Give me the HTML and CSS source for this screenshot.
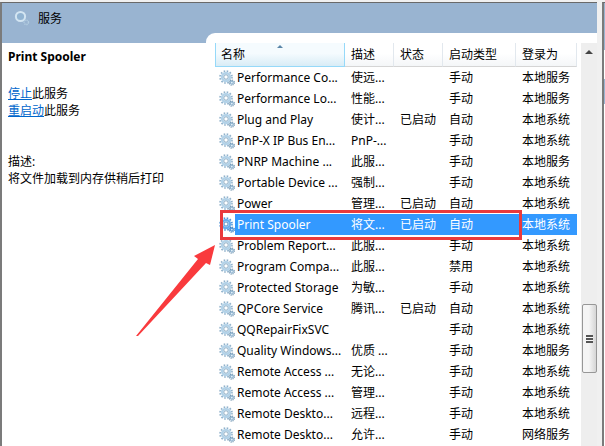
FILE: index.html
```html
<!DOCTYPE html>
<html lang="zh-CN">
<head>
    <meta charset="UTF-8">
    <title>服务</title>
    <link rel="stylesheet" href="styles.css">
</head>
<body>
    <svg class="defs" aria-hidden="true">
        <symbol id="gear" viewBox="0 0 16 16">
            <circle cx="7" cy="7" r="6" fill="none" stroke="#8fb0ca" stroke-width="1.6" stroke-dasharray="1.6 1.54"/>
            <circle cx="7" cy="7" r="4" fill="#e4f1f9" stroke="#b3d2e8" stroke-width="2.4"/>
            <circle cx="7" cy="7" r="2.2" fill="#fff" stroke="#7f9fb9" stroke-width=".8"/>
            <circle cx="12.8" cy="12.6" r="2.5" fill="none" stroke="#7899b2" stroke-width="1.3" stroke-dasharray="1.1 .86"/>
            <circle cx="12.8" cy="12.6" r="1.5" fill="#e4f1f9" stroke="#8fb3cf" stroke-width="1.2"/>
        </symbol>
        <symbol id="gear-on" viewBox="0 0 16 16">
            <circle cx="7" cy="7" r="6" fill="none" stroke="#4f94d6" stroke-width="1.6" stroke-dasharray="1.6 1.54"/>
            <circle cx="7" cy="7" r="4" fill="#cfe6fb" stroke="#69aeee" stroke-width="2.4"/>
            <circle cx="7" cy="7" r="2" fill="#fff" stroke="#3d7fbe" stroke-width=".8"/>
            <circle cx="12.8" cy="12.6" r="2.5" fill="none" stroke="#3f7fbd" stroke-width="1.3" stroke-dasharray="1.1 .86"/>
            <circle cx="12.8" cy="12.6" r="1.5" fill="#cfe6fb" stroke="#4b94d8" stroke-width="1.2"/>
        </symbol>
    </svg>

    <div class="window">
        <header class="titlebar">
            <svg class="title-icon" viewBox="0 0 16 16" aria-hidden="true">
                <circle cx="6.5" cy="6.5" r="4.6" fill="#92b4d2" stroke="#d3e5f2" stroke-width="2"/>
                <circle cx="12.3" cy="12.3" r="2.2" fill="none" stroke="#b3cde1" stroke-width="1.4" stroke-dasharray="1.2 .7"/>
            </svg>
            <span>服务</span>
        </header>

        <main class="content">
            <aside class="detail">
                <h1>Print Spooler</h1>
                <p class="actions">
                    <a href="#stop">停止</a>此服务<br>
                    <a href="#restart">重启动</a>此服务
                </p>
                <p>描述:<br>将文件加载到内存供稍后打印</p>
            </aside>

            <section class="list">
                <table class="services">
                    <colgroup>
                        <col class="col-name"><col class="col-desc"><col class="col-status"><col class="col-type"><col class="col-login">
                    </colgroup>
                    <thead>
                        <tr><th class="sorted">名称</th><th>描述</th><th>状态</th><th>启动类型</th><th>登录为</th></tr>
                    </thead>
                    <tbody>
                        <tr><td><svg class="gear"><use href="#gear"/></svg><span>Performance Co...</span></td><td>使远...</td><td></td><td>手动</td><td>本地服务</td></tr>
                        <tr><td><svg class="gear"><use href="#gear"/></svg><span>Performance Lo...</span></td><td>性能...</td><td></td><td>手动</td><td>本地服务</td></tr>
                        <tr><td><svg class="gear"><use href="#gear"/></svg><span>Plug and Play</span></td><td>使计...</td><td>已启动</td><td>自动</td><td>本地系统</td></tr>
                        <tr><td><svg class="gear"><use href="#gear"/></svg><span>PnP-X IP Bus En...</span></td><td>PnP-...</td><td></td><td>手动</td><td>本地系统</td></tr>
                        <tr><td><svg class="gear"><use href="#gear"/></svg><span>PNRP Machine ...</span></td><td>此服...</td><td></td><td>手动</td><td>本地服务</td></tr>
                        <tr><td><svg class="gear"><use href="#gear"/></svg><span>Portable Device ...</span></td><td>强制...</td><td></td><td>手动</td><td>本地系统</td></tr>
                        <tr><td><svg class="gear"><use href="#gear"/></svg><span>Power</span></td><td>管理...</td><td>已启动</td><td>自动</td><td>本地系统</td></tr>
                        <tr class="selected"><td><svg class="gear"><use href="#gear-on"/></svg><span>Print Spooler</span></td><td>将文...</td><td>已启动</td><td>自动</td><td>本地系统</td></tr>
                        <tr><td><svg class="gear"><use href="#gear"/></svg><span>Problem Report...</span></td><td>此服...</td><td></td><td>手动</td><td>本地系统</td></tr>
                        <tr><td><svg class="gear"><use href="#gear"/></svg><span>Program Compa...</span></td><td>此服...</td><td></td><td>禁用</td><td>本地系统</td></tr>
                        <tr><td><svg class="gear"><use href="#gear"/></svg><span>Protected Storage</span></td><td>为敏...</td><td></td><td>手动</td><td>本地系统</td></tr>
                        <tr><td><svg class="gear"><use href="#gear"/></svg><span>QPCore Service</span></td><td>腾讯...</td><td>已启动</td><td>自动</td><td>本地系统</td></tr>
                        <tr><td><svg class="gear"><use href="#gear"/></svg><span>QQRepairFixSVC</span></td><td></td><td></td><td>手动</td><td>本地系统</td></tr>
                        <tr><td><svg class="gear"><use href="#gear"/></svg><span>Quality Windows...</span></td><td>优质 ...</td><td></td><td>手动</td><td>本地服务</td></tr>
                        <tr><td><svg class="gear"><use href="#gear"/></svg><span>Remote Access ...</span></td><td>无论...</td><td></td><td>手动</td><td>本地系统</td></tr>
                        <tr><td><svg class="gear"><use href="#gear"/></svg><span>Remote Access ...</span></td><td>管理...</td><td></td><td>手动</td><td>本地系统</td></tr>
                        <tr><td><svg class="gear"><use href="#gear"/></svg><span>Remote Deskto...</span></td><td>远程...</td><td></td><td>手动</td><td>本地系统</td></tr>
                        <tr><td><svg class="gear"><use href="#gear"/></svg><span>Remote Deskto...</span></td><td>允许...</td><td></td><td>手动</td><td>网络服务</td></tr>
                    </tbody>
                </table>

                <div class="scrollbar" aria-hidden="true">
                    <span class="scroll-up"></span>
                    <span class="scroll-thumb"><i></i></span>
                </div>

                <!-- callout over the selected service -->
                <div class="callout"></div>
                <svg class="arrow" viewBox="0 0 80 92" aria-hidden="true">
                    <path d="M0 91 L62 14 L58 11 L79 0 L74 20 L70 18 L2 91 Z" fill="#f93a3d"/>
                </svg>
            </section>
        </main>
    </div>
    <div class="next-pane"></div>
</body>
</html>
```
FILE: styles.css
```css
:root {
    --band: #99b4d1;
    --select: #3399ff;
    --mark: #e93a3e;
}
* { box-sizing: border-box; }
body {
    margin: 0;
    height: 100vh;
    overflow: hidden;
    display: flex;
    gap: 5px;
    padding-top: 2px;
    background: #f0f0f0;
    color: #000;
    font: 12px/17px "Noto Sans", "Noto Sans CJK SC", sans-serif;
}
.defs { position: absolute; width: 0; height: 0; }
.window {
    flex: 1;
    display: flex;
    flex-direction: column;
    border-top: 1px solid #696969;
    border-left: 2px solid #7b7b7b;
    background: var(--band);
}
/* sliver of the actions pane at the window edge */
.next-pane {
    flex: none;
    width: 3px;
    border-top: 1px solid #696969;
    border-left: 2px solid #7b7b7b;
    background: linear-gradient(var(--band) 47px, #fff 47px 76px, var(--band) 76px 101px, #fff 101px);
}
.titlebar {
    display: flex;
    align-items: center;
    gap: 8px;
    height: 30px;
    padding-left: 12px;
}
.title-icon { width: 16px; height: 16px; }
.content {
    flex: 1;
    min-height: 0;
    display: flex;
}
.detail {
    width: 204px;
    margin-top: 10px;
    padding: 5px 6px;
    background: #fff;
}
.detail h1 { margin: 0 0 20px; font-size: 12px; line-height: 17px; }
.detail p { margin: 0; }
.detail .actions { margin-bottom: 34px; }
.detail a { color: #0066cc; }

.list {
    position: relative;
    flex: 1;
    display: flex;
    gap: 4px;
    padding: 10px 0 0 9px;
    background: #fff;
    border-top-left-radius: 9px;
}
.services {
    flex: 1;
    align-self: flex-start;
    table-layout: fixed;
    border-collapse: separate;
    border-spacing: 0;
    width: 100%;
}
.col-name { width: 130px; }
.col-desc { width: 49px; }
.col-status { width: 49px; }
.col-type { width: 73px; }
.services th {
    height: 24px;
    padding: 0 0 0 6px;
    text-align: left;
    font-weight: normal;
    white-space: nowrap;
    border-right: 1px solid #e2e8ee;
    border-bottom: 1px solid #d5d5d5;
    background: linear-gradient(#fff 45%, #f4f6f8);
}
.services th.sorted {
    position: relative;
    border: 1px solid #96d9f9;
    border-top: 0;
    padding-left: 5px;
    background: linear-gradient(#f5fbfe 45%, #d8ecf6);
}
.sorted::after {
    content: "";
    position: absolute;
    top: 2px;
    left: 50%;
    margin-left: -3px;
    border: 3px solid transparent;
    border-top: 0;
    border-bottom-color: #5a86a8;
}
.services td {
    height: 21px;
    padding: 0 0 0 6px;
    white-space: nowrap;
}
.services td:first-child {
    display: flex;
    align-items: center;
    padding-left: 4px;
}
.services td:first-child span {
    flex: 1;
    height: 21px;
    padding-left: 2px;
    line-height: 21px;
}
.gear { flex: none; width: 16px; height: 16px; }
.selected td:not(:first-child),
.selected td:first-child span {
    background: var(--select);
    color: #fff;
}

.scrollbar {
    flex: none;
    width: 16px;
    display: flex;
    flex-direction: column;
    align-items: center;
    background: #eeeeee;
}
.scroll-up {
    margin-top: 7px;
    border: 4px solid transparent;
    border-top: 0;
    border-bottom-color: #444;
}
.scroll-thumb {
    display: flex;
    align-items: center;
    justify-content: center;
    width: 15px;
    height: 69px;
    margin-top: 250px;
    border: 1px solid #979797;
    border-radius: 2px;
    background: linear-gradient(90deg, #f5f5f5 45%, #d5d5d5);
}
.scroll-thumb i {
    width: 7px;
    height: 8px;
    background: repeating-linear-gradient(#555 0 2px, #f8f8f8 2px 3px);
}
.callout {
    position: absolute;
    top: 177px;
    left: 14px;
    width: 302px;
    height: 30px;
    border: 3px solid var(--mark);
}
.arrow {
    position: absolute;
    top: 212px;
    left: -70px;
    width: 80px;
    height: 92px;
}
```
